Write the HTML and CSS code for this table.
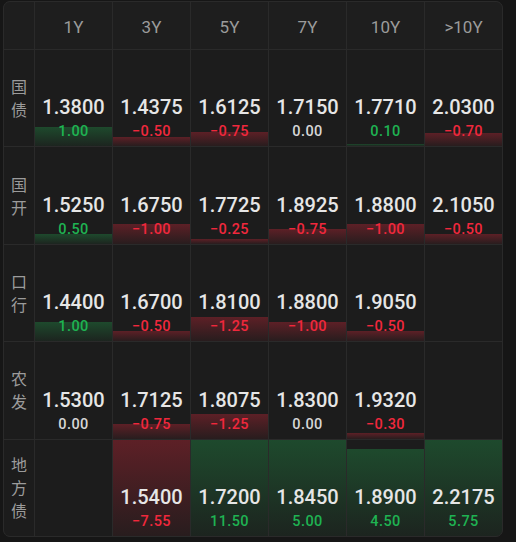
FILE: index.html
```html
<!DOCTYPE html>
<html lang="zh-CN">
<head>
  <meta charset="UTF-8" />
  <meta name="viewport" content="width=device-width, initial-scale=1.0" />
  <title>利率债收益率</title>
  <link rel="stylesheet" href="styles.css">
</head>
<body>
  <div id="board" class="board"></div>

  <script>
    const tenors = ['1Y', '3Y', '5Y', '7Y', '10Y', '>10Y'];
    const rows = [
      { name: '国债', cells: [[1.3800, 1.00], [1.4375, -0.50], [1.6125, -0.75], [1.7150, 0], [1.7710, 0.10], [2.0300, -0.70]] },
      { name: '国开', cells: [[1.5250, 0.50], [1.6750, -1.00], [1.7725, -0.25], [1.8925, -0.75], [1.8800, -1.00], [2.1050, -0.50]] },
      { name: '口行', cells: [[1.4400, 1.00], [1.6700, -0.50], [1.8100, -1.25], [1.8800, -1.00], [1.9050, -0.50], null] },
      { name: '农发', cells: [[1.5300, 0], [1.7125, -0.75], [1.8075, -1.25], [1.8300, 0], [1.9320, -0.30], null] },
      { name: '地方债', cells: [null, [1.5400, -7.55], [1.7200, 11.50], [1.8450, 5.00], [1.8900, 4.50], [2.2175, 5.75]] }
    ];

    // px of bar per 1bp change, capped at the cell height
    const BAR_UNIT = 19.4;

    function fmtChange(v) {
      if (v < 0) return '\u2212' + Math.abs(v).toFixed(2);
      return v.toFixed(2);
    }

    function renderBoard() {
      const board = document.getElementById('board');
      let html = '<div class="head"></div>';
      tenors.forEach(t => {
        html += `<div class="head">${t}</div>`;
      });

      rows.forEach(row => {
        html += `<div class="label">${row.name.split('').join('<br>')}</div>`;
        row.cells.forEach(cell => {
          if (!cell) {
            html += '<div class="cell"></div>';
            return;
          }
          const [yieldVal, change] = cell;
          const dir = change > 0 ? 'up' : change < 0 ? 'down' : 'flat';
          const barH = Math.min(Math.abs(change) * BAR_UNIT, 100);
          html += `
            <div class="cell">
              ${change !== 0 ? `<div class="bar ${dir}" style="height:${barH}px"></div>` : ''}
              <div class="val">${yieldVal.toFixed(4)}</div>
              <div class="chg ${dir}">${fmtChange(change)}</div>
            </div>
          `;
        });
      });

      board.innerHTML = html;
    }

    renderBoard();
  </script>
</body>
</html>
```

FILE: styles.css
```css
html, body {
  margin: 0;
  background: #161616;
}
body {
  font-family: Roboto, "Noto Sans CJK SC", sans-serif;
  width: 516px;
  height: 542px;
  overflow: hidden;
}
.board {
  display: grid;
  grid-template-columns: 30px repeat(6, 77px);
  grid-template-rows: 47px repeat(5, 96.4px);
  gap: 1px;
  width: max-content;
  margin: 1px 0 0 3px;
  background: #2a2a2a;
  border: 1px solid #2a2a2a;
  border-radius: 7px;
  overflow: hidden;
}
.head {
  background: #1e1e1e;
  color: #9b9b9b;
  font-size: 17px;
  display: flex;
  align-items: center;
  justify-content: center;
  padding-top: 2px;
}
.label {
  background: #1c1c1c;
  color: #9b9b9b;
  font-family: "Noto Sans CJK SC", sans-serif;
  font-size: 16px;
  line-height: 23px;
  display: flex;
  align-items: center;
  justify-content: center;
  text-align: center;
}
.cell {
  position: relative;
  background: #1c1c1c;
  display: flex;
  flex-direction: column;
  align-items: center;
  justify-content: flex-end;
  padding-bottom: 5px;
  overflow: hidden;
}
.bar {
  position: absolute;
  left: 0;
  right: 0;
  bottom: 0;
  max-height: 100%;
}
.bar.up {
  background: linear-gradient(to bottom, rgba(34, 170, 80, 0.32), rgba(34, 170, 80, 0.06));
}
.bar.down {
  background: linear-gradient(to bottom, rgba(230, 40, 60, 0.32), rgba(230, 40, 60, 0.06));
}
.val {
  position: relative;
  color: #e6e6e6;
  font-size: 20px;
  line-height: 24px;
  font-weight: 500;
  margin-bottom: 4px;
}
.chg {
  position: relative;
  font-size: 14.5px;
  line-height: 18px;
  font-weight: 500;
  letter-spacing: 0.4px;
}
.chg.up {
  color: #1fb352;
}
.chg.down {
  color: #f0283c;
}
.chg.flat {
  color: #d6d6d6;
}
```
